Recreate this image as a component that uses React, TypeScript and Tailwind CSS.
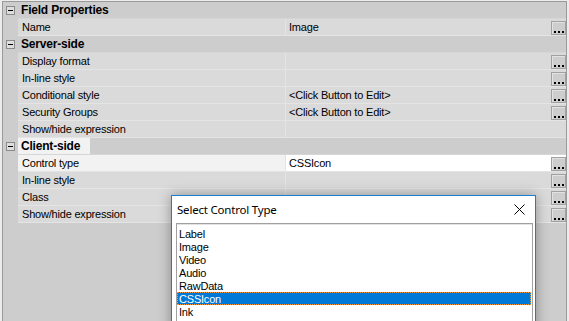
import React from "react";

type Prop = {
    name: string;
    value?: string;
    btn?: boolean;
    selected?: boolean;
};

type Section = {
    title: string;
    focused?: boolean;
    rows: Prop[];
};

const sections: Section[] = [
    {
        title: "Field Properties",
        rows: [{ name: "Name", value: "Image", btn: true }],
    },
    {
        title: "Server-side",
        rows: [
            { name: "Display format", btn: true },
            { name: "In-line style", btn: true },
            { name: "Conditional style", value: "<Click Button to Edit>", btn: true },
            { name: "Security Groups", value: "<Click Button to Edit>", btn: true },
            { name: "Show/hide expression" },
        ],
    },
    {
        title: "Client-side",
        focused: true,
        rows: [
            { name: "Control type", value: "CSSIcon", btn: true, selected: true },
            { name: "In-line style", btn: true },
            { name: "Class", btn: true },
            { name: "Show/hide expression", btn: true },
        ],
    },
];

const controlTypes = ["Label", "Image", "Video", "Audio", "RawData", "CSSIcon", "Ink"];

// the little "..." button at the right end of a row
const EllipsisButton = () => (
    <div className="flex h-[14px] w-[15px] items-end justify-center gap-[2px] self-end border border-[#a0a0a0] bg-[#cdcdcd] pb-[1px] shadow-[inset_1px_1px_0_#e2e2e2]">
        <span className="h-[2px] w-[2px] bg-black" />
        <span className="h-[2px] w-[2px] bg-black" />
        <span className="h-[2px] w-[2px] bg-black" />
    </div>
);

const CollapseBox = () => (
    <div className="ml-[3px] flex h-[9px] w-[9px] items-center justify-center border border-[#8a8a8a] bg-[#dedede]">
        <span className="h-[1px] w-[5px] bg-black" />
    </div>
);

const PropertyRow = ({ row }: { row: Prop }) => (
    <div className="flex h-[17px]">
        <div className="w-[15px] shrink-0" />
        <div className="flex flex-1 border-b border-[#e4e4e4]">
            <div
                className={`flex w-[268px] shrink-0 items-center border-r border-[#e4e4e4] pl-[4px] ${
                    row.selected ? "bg-[#f2f2f2]" : "bg-[#dadada]"
                }`}
            >
                {row.name}
            </div>
            <div className={`flex flex-1 ${row.selected ? "bg-white" : "bg-[#dadada]"}`}>
                <span className="flex flex-1 items-center pl-[3px]">{row.value}</span>
                {row.btn && <EllipsisButton />}
            </div>
        </div>
    </div>
);

const CategoryRow = ({ section }: { section: Section }) => (
    <div className="flex h-[17px] items-center">
        <div className="flex w-[15px] shrink-0 items-center">
            <CollapseBox />
        </div>
        <div className="flex h-full flex-1 border-b border-[#d6d6d6]">
            <span
                className={`flex items-center pl-[3px] text-[12px] font-bold tracking-[-0.2px] ${
                    section.focused ? "bg-[#f2f2f2] pr-[10px]" : ""
                }`}
            >
                {section.title}
            </span>
        </div>
    </div>
);

const SelectControlDialog = () => (
    <div className="absolute left-[171px] top-[195px] h-[140px] w-[365px] border border-[#1a7fd4] bg-white shadow-[0_0_12px_rgba(0,0,0,0.35)]">
        <div className="flex h-[27px] items-center justify-between pl-[5px] pr-[10px]">
            <span className="font-['Noto_Sans',sans-serif] text-[11.5px] text-black">Select Control Type</span>
            <svg width="11" height="11" viewBox="0 0 11 11">
                <path d="M0.5 0.5 L10.5 10.5 M10.5 0.5 L0.5 10.5" stroke="#000" strokeWidth="1" />
            </svg>
        </div>
        <div className="ml-[4px] h-[120px] w-[357px] border border-[#a0a0a0] pt-[3px] shadow-[inset_0_1px_0_#e3e3e3]">
            {controlTypes.map((t) => (
                <div
                    key={t}
                    className={`mr-[1px] flex h-[13px] items-center pt-[1px] ${
                        t === "CSSIcon"
                            ? "border border-dotted border-[#f59a3a] bg-[#0078d7] pl-[1px] text-white"
                            : "pl-[2px] text-black"
                    }`}
                >
                    {t}
                </div>
            ))}
        </div>
    </div>
);

export default function App() {
    return (
        <div className="relative h-[321px] w-[569px] overflow-hidden bg-[#ececec] pl-[2px] pt-[1px] font-['Liberation_Sans',Arial,sans-serif] text-[11px] tracking-[-0.2px] text-black">
            <div className="h-[320px] w-[565px] border-l border-r border-t border-[#9a9a9a] bg-[#cdcdcd]">
                {sections.map((section) => (
                    <div key={section.title}>
                        <CategoryRow section={section} />
                        {section.rows.map((row, i) => (
                            <PropertyRow key={i} row={row} />
                        ))}
                    </div>
                ))}
            </div>
            <SelectControlDialog />
        </div>
    );
}
